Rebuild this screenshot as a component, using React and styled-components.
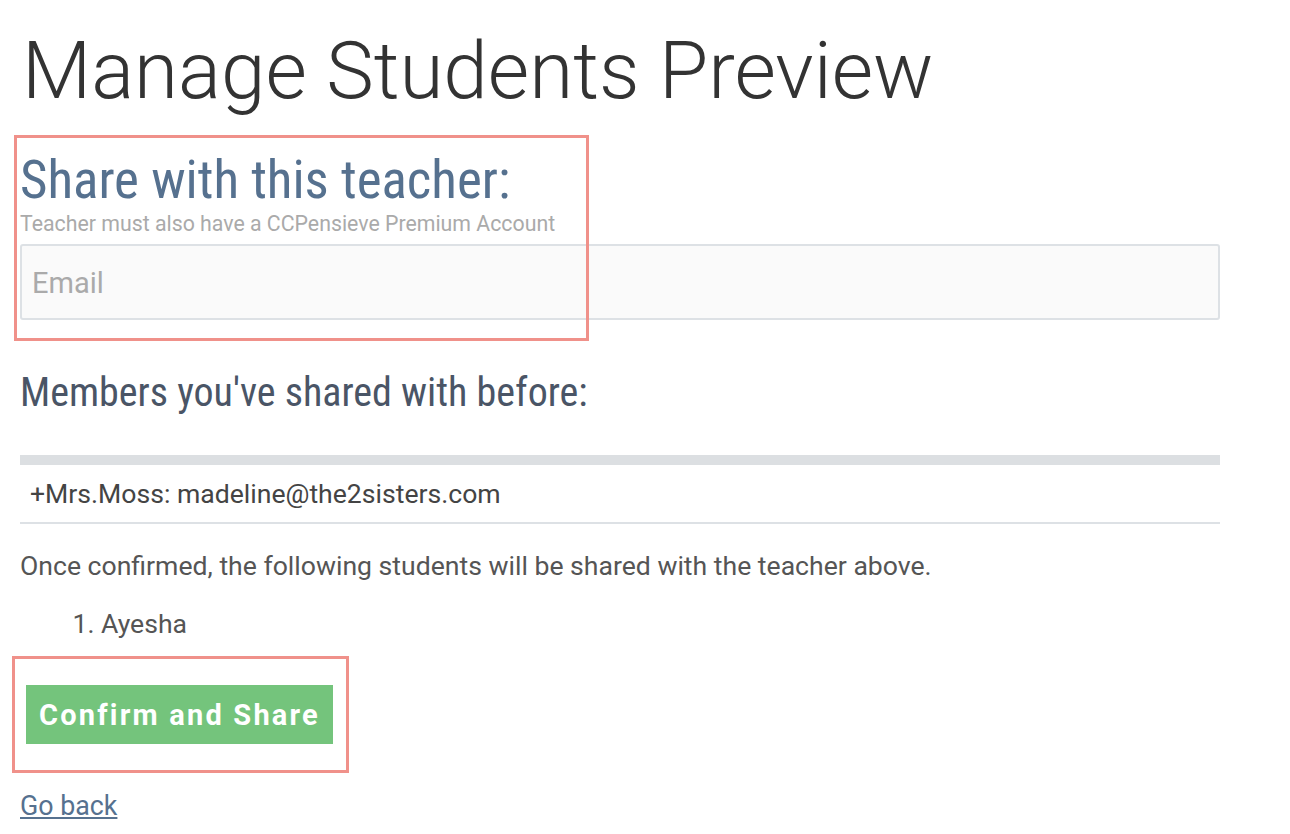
import styled, { createGlobalStyle } from "styled-components";

const GlobalStyle = createGlobalStyle`
body {
  margin: 0;
  background: #fff;
  font-family: Roboto, "Liberation Sans", sans-serif;
}
`

const Page = styled.div`
position: relative;
padding: 21px 70px 11px 20px;
width: 1200px;
`

const Title = styled.h1`
font-family: Roboto, sans-serif;
font-weight: 300;
font-size: 80px;
line-height: 100px;
color: #333;
margin: 0 0 0 2px;
`

const CondensedHeading = styled.h2`
font-family: "Roboto Condensed", Roboto, sans-serif;
font-stretch: condensed;
font-weight: 400;
font-size: ${p => p.size}px;
line-height: ${p => p.lh}px;
color: ${p => p.color};
margin: ${p => p.top}px 0 0;
`

const Hint = styled.div`
font-size: 21.3px;
line-height: 24px;
color: #aaa;
margin-top: 2px;
`

const EmailInput = styled.input`
box-sizing: border-box;
display: block;
width: 100%;
height: 76px;
margin-top: 8px;
background: #fafafa;
border: 2px solid #dde1e5;
border-radius: 3px;
padding: 2px 10px 0;
font-family: Roboto, sans-serif;
font-size: 29px;
color: #333;
outline: none;
&::placeholder {
  color: #aaa;
}
`

const MembersTable = styled.div`
margin-top: 39px;
border-top: 10px solid #dcdfe2;
border-bottom: 2px solid #dde1e5;
`

const MemberRow = styled.div`
padding: 0 10px;
height: 57px;
display: flex;
align-items: center;
font-size: 26.6px;
color: #444;
`

const Note = styled.p`
font-size: 26.6px;
line-height: 32px;
color: #555;
margin: 26px 0 0;
`

const StudentList = styled.ol`
font-size: 26.6px;
line-height: 32px;
color: #555;
margin: 26px 0 0;
padding-left: 81px;
`

const ConfirmButton = styled.button`
display: block;
margin: 45px 0 0 6px;
width: 307px;
height: 59px;
border: none;
background: #74c47c;
color: #fff;
font-family: Roboto, sans-serif;
font-weight: 700;
font-size: 29px;
letter-spacing: 2.2px;
cursor: pointer;
`

const BackLink = styled.a`
display: inline-block;
margin-top: 46px;
font-size: 26.8px;
line-height: 32px;
color: #56718f;
text-decoration: underline;
`

const Highlight = styled.div`
position: absolute;
left: ${p => p.x}px;
top: ${p => p.y}px;
width: ${p => p.w}px;
height: ${p => p.h}px;
border: 3px solid #f0918a;
box-sizing: border-box;
pointer-events: none;
`

const App = () => {
    return (
        <Page>
            <GlobalStyle />
            <Title>Manage Students Preview</Title>
            <CondensedHeading size={53} lh={60} top={29} color="#56718f">
                Share with this teacher:
            </CondensedHeading>
            <Hint>Teacher must also have a CCPensieve Premium Account</Hint>
            <EmailInput placeholder="Email" />

            <CondensedHeading size={40} lh={46} top={50} color="#4a5566">
                Members you've shared with before:
            </CondensedHeading>
            <MembersTable>
                <MemberRow>+Mrs.Moss: madeline@the2sisters.com</MemberRow>
            </MembersTable>

            <Note>Once confirmed, the following students will be shared with the teacher above.</Note>
            <StudentList>
                <li>Ayesha</li>
            </StudentList>

            <ConfirmButton>Confirm and Share</ConfirmButton>
            <BackLink href="#">Go back</BackLink>

            <Highlight x={14} y={135} w={575} h={206} />
            <Highlight x={12} y={656} w={337} h={117} />
        </Page>
    );
}

export default App;
